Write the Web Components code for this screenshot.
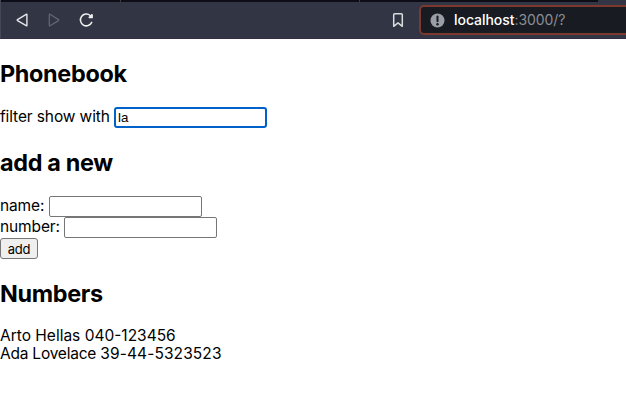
<!DOCTYPE html>
<html lang="en">
<head>
<meta charset="utf-8">
<title>Phonebook</title>
<style>
html,body{margin:0;height:100%;background:#fff;color:#000;overflow:hidden}
body{font:15.5px/18px Inter,"Liberation Sans",sans-serif}
</style>
</head>
<body>
<browser-bar></browser-bar>
<phone-book></phone-book>
<script>
class BrowserBar extends HTMLElement {
  constructor() {
    super();
    this.attachShadow({mode:'open'}).innerHTML = `
<style>
:host{display:flex;flex-direction:column;height:39px;background:#323544;box-sizing:border-box;border-bottom:1px solid #342f46;border-left:1px solid #454857}
.tabs{display:flex;height:2px;width:597px;background:#0d0d17;flex:none}
.tabs i{box-sizing:border-box;border-right:1px solid #3c3b40}
.tabs i:nth-child(1){width:120px}.tabs i:nth-child(2){width:239px}
.bar{flex:1;display:flex;align-items:center;min-height:0}
svg{display:block;flex:none}
.nav{display:flex;gap:16px;padding-left:13px;flex:1}
.mark{margin-right:12px}
.url{display:flex;align-items:center;box-sizing:border-box;width:215px;height:30px;margin-right:-8px;padding-left:9px;background:#181b22;border:2px solid #7d382f;border-radius:5px;flex:none;white-space:nowrap;font-size:14px;color:#8c8e93}
.url svg{margin-right:9px}
.url span{letter-spacing:-.05px}
b{font-weight:500;color:#fff}
</style>
<div class="tabs"><i></i><i></i></div>
<div class="bar">
<div class="nav">
<svg width="16" height="18" viewBox="0 0 16 18" fill="none" stroke="#e4e7e7" stroke-width="1.4" stroke-linejoin="round"><path d="M12.9 3.6v10.8q0 .7-.7.3L3.5 9.6q-.6-.5 0-1L12.2 3.3q.7-.4.7.3z"/></svg>
<svg width="16" height="18" viewBox="0 0 16 18" fill="none" stroke="#626573" stroke-width="1.3" stroke-linejoin="round"><path d="M3.3 3.6v10.8q0 .7.7.3l8.5-5.1q.6-.5 0-1L4 3.3q-.7-.4-.7.3z"/></svg>
<svg width="18" height="18" viewBox="0 0 18 18" fill="none" stroke="#edf0f0" stroke-width="1.5" stroke-linecap="round"><path d="M12.2 4.5A5.9 5.9 0 1 0 13.7 11.4"/><path d="M11.4 6.4h2.6V4z" fill="#edf0f0" stroke-width="1.8" stroke-linejoin="round"/></svg>
</div>
<svg class="mark" width="18" height="18" viewBox="0 0 18 18" fill="none" stroke="#d9dddd" stroke-width="1.5" stroke-linejoin="round"><path d="M4.7 3.7q0-1 1-1h6.6q1 0 1 1v11.6L9 11.9l-4.3 3.4z"/></svg>
<div class="url">
<svg width="15" height="15" viewBox="0 0 15 15"><circle cx="7.5" cy="7.5" r="7" fill="#9a9da6"/><path d="M7.5 3.5v4.7" stroke="#181b22" stroke-width="2" stroke-linecap="round"/><circle cx="7.5" cy="11.2" r="1.2" fill="#181b22"/></svg>
<span><b>localhost</b>:3000/?</span>
</div>
</div>`;
  }
}
class FormRow extends HTMLElement {
  constructor() {
    super();
    this.attachShadow({mode:'open'}).innerHTML = `
<style>
:host{display:flex;align-items:center;height:21px}
label{white-space:nowrap;flex:none;letter-spacing:-.12px;padding-bottom:2px}
input{box-sizing:border-box;width:153px;height:21px;margin:0;padding:1px 2px;border:1px solid #767676;border-radius:2px;outline:none;background:#fff;color:#000;font:13.33px "Liberation Sans",sans-serif}
:host([active]) input{border:2px solid #0061cb;border-radius:3px;padding:0 1px 0 2px}
</style><label><slot></slot></label><input type="text">`;
  }
  connectedCallback() {
    this.shadowRoot.querySelector('input').value = this.getAttribute('value') || '';
    this.shadowRoot.querySelector('label').style.width = this.getAttribute('label-width') + 'px';
  }
}
class PhoneBook extends HTMLElement {
  constructor() {
    super();
    this.attachShadow({mode:'open'}).innerHTML = `
<style>
:host{display:block;padding-top:20px}
h2{margin:0;font-size:23.4px;line-height:29px;font-weight:700;white-space:nowrap;letter-spacing:-.32px}
form-row.filter{margin:19px 0 20px}
.add{margin:19px 0 20px}
button{display:block;box-sizing:border-box;width:38px;height:21px;margin:0;padding:0;border:1px solid #767676;border-radius:3px;background:#efefef;color:#000;font:13px Inter,sans-serif;letter-spacing:-.2px}
.list{margin-top:19px}
p{margin:0;height:18px;white-space:nowrap;letter-spacing:0}
.tight{letter-spacing:-.22px}
.loose{letter-spacing:.1px}
</style>
<h2>Phonebook</h2>
<form-row class="filter" active value="la" label-width="114">filter show with</form-row>
<h2>add a new</h2>
<div class="add">
<form-row label-width="49">name:</form-row>
<form-row label-width="64">number:</form-row>
<button>add</button>
</div>
<h2>Numbers</h2>
<div class="list"><p>Arto Hellas 040-123456</p><p><span class="tight">Ada Lovelace </span><span class="loose">39-44-5323523</span></p></div>`;
  }
}
customElements.define('browser-bar', BrowserBar);
customElements.define('form-row', FormRow);
customElements.define('phone-book', PhoneBook);
</script>
</body>
</html>
